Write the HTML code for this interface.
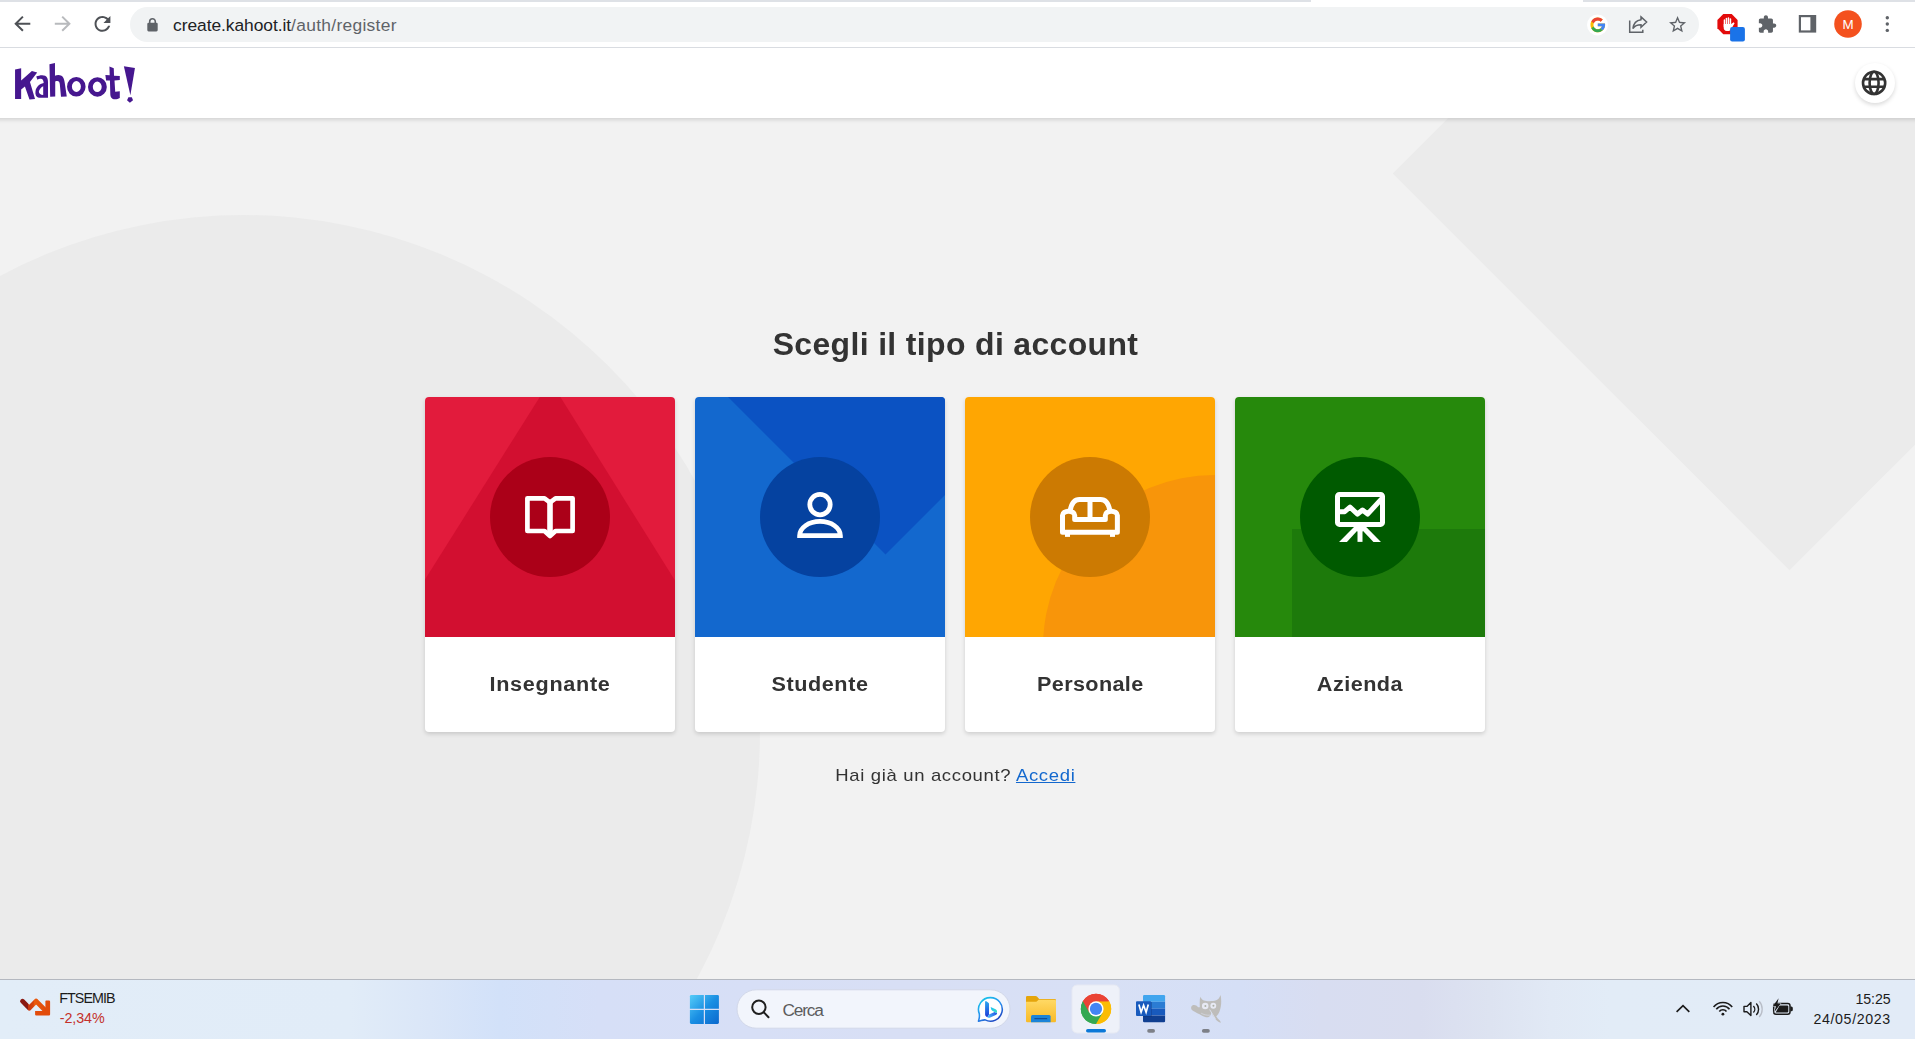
<!DOCTYPE html>
<html lang="it">
<head>
<meta charset="utf-8">
<title>Kahoot!</title>
<style>
*{box-sizing:border-box;margin:0;padding:0}
html,body{width:1915px;height:1039px;overflow:hidden;background:#f2f2f2;font-family:"Liberation Sans",sans-serif}
.abs{position:absolute}
#tabstrip{left:0;top:0;width:1915px;height:2px;background:#dee1e6}
#tabstrip .tab{left:1311px;top:0;width:272px;height:2px;background:#fff}
#toolbar{left:0;top:2px;width:1915px;height:46px;background:#fff;border-bottom:1px solid #d9dce1}
#omni{left:130px;top:7px;width:1569px;height:35px;border-radius:17.5px;background:#f1f3f4}
#url{left:173px;top:12.500px;height:24px;line-height:24px;font-size:17.4px;color:#202124;white-space:nowrap;letter-spacing:-0.05px}
#url span{color:#5f6368;letter-spacing:.3px}
#khwrap{left:0;top:48px;width:1915px;height:84px;overflow:hidden;z-index:5}
#kheader{left:-20px;top:0;width:1955px;height:70px;background:#fff;box-shadow:0 2px 4px 0 rgba(0,0,0,.13)}
#page{left:0;top:118px;width:1915px;height:861px;background:#f2f2f2;overflow:hidden}
#bgcircle{left:-273.500px;top:96.500px;width:1033px;height:1033px;border-radius:50%;background:#ebebeb}
#bgsquare{left:1509px;top:-225px;width:561px;height:561px;background:#ebebeb;transform:rotate(45deg)}
#globe{left:1854.5px;top:62.5px;width:40px;height:40px;border-radius:50%;background:#fff;box-shadow:0 2px 4px 0 rgba(0,0,0,.15);z-index:6}
h1 span{will-change:transform;display:inline-block;transform:scaleX(1.03);letter-spacing:.35px}
h1{left:0;top:322.800px;width:1910px;text-align:center;font-size:31px;font-weight:bold;color:#333;line-height:44px;white-space:nowrap}
.card{top:397px;width:250px;height:335px;border-radius:4px;background:#fff;box-shadow:0 2px 4px 0 rgba(0,0,0,.15);overflow:hidden}
.card .art{left:0;top:0;width:250px;height:240px;overflow:hidden}
.card .dot{left:65px;top:60px;width:120px;height:120px;border-radius:50%}
.lbl span{will-change:transform;display:inline-block;transform:scaleX(1.08);letter-spacing:.65px}
.lbl{top:668.5px;width:250px;text-align:center;font-weight:bold;font-size:20px;color:#333;line-height:30px;white-space:nowrap}
#login span{will-change:transform;display:inline-block;transform:scaleX(1.088);letter-spacing:.6px}
#login{left:0;top:762.7px;width:1910px;text-align:center;font-size:17px;color:#333;line-height:26px;white-space:nowrap}
#login a{color:#1368ce;text-decoration:underline}
#taskbar{left:0;top:979px;width:1915px;height:60px;border-top:1px solid #b4b8c0;background:linear-gradient(90deg,#e2edf8 0,#e1ecf8 350px,#dae6f8 430px,#d2e1f9 500px,#d6dff7 600px,#d8dff5 900px,#d8e0f5 1100px,#d5dff6 1240px,#d8ddf1 1320px,#d9ddef 1420px,#dde3f1 1490px,#e1e9f5 1550px,#e2ecf7 1610px,#e2ebf7 1915px)}
.tk{z-index:10;line-height:20px;white-space:nowrap}
</style>
</head>
<body>
<div id="tabstrip" class="abs"><div class="tab abs"></div></div>
<div id="toolbar" class="abs"></div>
<div id="omni" class="abs"></div>
<div id="url" class="abs">create.kahoot.it<span>/auth/register</span></div>

<svg class="abs" style="left:0;top:0;z-index:3" width="1915" height="48" viewBox="0 0 1915 48">
  <!-- back -->
  <g fill="none" stroke="#4e5156" stroke-width="2" stroke-linecap="butt" stroke-linejoin="miter">
    <path d="M30.300,23.700 H16.500 M22.900,16.600 L15.700,23.700 L22.900,30.800"/>
  </g>
  <!-- forward -->
  <g fill="none" stroke="#b8babd" stroke-width="2">
    <path d="M54.800,23.700 H68.600 M62.200,16.600 L69.400,23.700 L62.200,30.800"/>
  </g>
  <!-- reload -->
  <g transform="translate(90.600,12) scale(0.99)">
    <path fill="#4e5156" d="M17.650 6.350C16.200 4.900 14.210 4 12 4c-4.420 0-7.990 3.580-7.990 8s3.570 8 7.990 8c3.730 0 6.840-2.550 7.730-6h-2.080c-.82 2.330-3.040 4-5.650 4-3.310 0-6-2.690-6-6s2.690-6 6-6c1.660 0 3.140.69 4.220 1.780L13 11h7V4l-2.350 2.350z"/>
  </g>
  <!-- lock -->
  <rect x="147.300" y="22.800" width="10.400" height="8.600" rx="1.300" fill="#5f6368"/>
  <path d="M149.700,23.500 V21.500 A2.800,2.800 0 0 1 155.300,21.500 V23.500" fill="none" stroke="#5f6368" stroke-width="1.600"/>
  <!-- google G -->
  <circle cx="1597.500" cy="24.900" r="10.500" fill="#fff"/>
  <g transform="translate(1589.040,16.140) scale(0.365)">
    <path fill="#FBBC05" d="M43.611,20.083H42V20H24v8h11.303c-1.649,4.657-6.080,8-11.303,8c-6.627,0-12-5.373-12-12c0-6.627,5.373-12,12-12c3.059,0,5.842,1.154,7.961,3.039l5.657-5.657C34.046,6.053,29.268,4,24,4C12.955,4,4,12.955,4,24c0,11.045,8.955,20,20,20c11.045,0,20-8.955,20-20C44,22.659,43.862,21.350,43.611,20.083z"/>
    <path fill="#EA4335" d="M6.306,14.691l6.571,4.819C14.655,15.108,18.961,12,24,12c3.059,0,5.842,1.154,7.961,3.039l5.657-5.657C34.046,6.053,29.268,4,24,4C16.318,4,9.656,8.337,6.306,14.691z"/>
    <path fill="#34A853" d="M24,44c5.166,0,9.860-1.977,13.409-5.192l-6.190-5.238C29.211,35.091,26.715,36,24,36c-5.202,0-9.619-3.317-11.283-7.946l-6.522,5.025C9.505,39.556,16.227,44,24,44z"/>
    <path fill="#4285F4" d="M43.611,20.083H42V20H24v8h11.303c-0.792,2.237-2.231,4.166-4.087,5.571c0.001-0.001,0.002-0.001,0.003-0.002l6.190,5.238C36.971,39.205,44,34,44,24C44,22.659,43.862,21.350,43.611,20.083z"/>
  </g>
  <!-- share -->
  <g fill="none" stroke="#5f6368" stroke-width="1.500">
    <path d="M1629.700,20.600 V32.200 H1642.800 V29.800"/>
    <path d="M1641,16.900 L1646.600,22 L1641,27.300 V24.700 C1637,24.700 1634.600,26 1632.900,28.500 C1633.500,23.700 1636.200,20.300 1641,19.700 Z" stroke-linejoin="miter"/>
  </g>
  <!-- star -->
  <g transform="translate(1667.300,14.400) scale(0.855)">
    <path fill="#5f6368" d="M22 9.240l-7.190-.62L12 2 9.190 8.630 2 9.240l5.460 4.730L5.820 21 12 17.270 18.180 21l-1.630-7.030L22 9.240zM12 15.400l-3.760 2.270 1-4.280-3.320-2.880 4.380-.38L12 6.100l1.710 4.040 4.380.38-3.320 2.880 1 4.280L12 15.400z"/>
  </g>
  <!-- adblock -->
  <polygon points="1723.300,14.100 1731.700,14.100 1737.600,20 1737.600,28.300 1731.700,34.200 1723.300,34.200 1717.400,28.300 1717.400,20" fill="#e30b0b"/>
  <g fill="#fff">
    <rect x="1723.700" y="19.300" width="1.500" height="8" rx=".75"/>
    <rect x="1725.700" y="17.800" width="1.500" height="9" rx=".75"/>
    <rect x="1727.700" y="17.300" width="1.500" height="9" rx=".75"/>
    <rect x="1729.700" y="18.300" width="1.500" height="9" rx=".75"/>
    <path d="M1723.700,24 H1731.200 L1733.600,22.200 L1734.600,23.200 L1731.200,29 C1730.500,30.500 1729.500,31 1728,31 H1726.700 C1724.700,31 1723.700,29.500 1723.700,28 Z"/>
  </g>
  <rect x="1730.100" y="27" width="14.800" height="14.600" rx="2" fill="#1a73e8"/>
  <!-- puzzle -->
  <g transform="translate(1757.200,14.400) scale(0.829)">
    <path fill="#5f6368" d="M20.500 11H19V7c0-1.100-.9-2-2-2h-4V3.500C13 2.120 11.880 1 10.500 1S8 2.120 8 3.500V5H4c-1.100 0-1.990.9-1.990 2v3.800H3.500c1.490 0 2.700 1.210 2.700 2.700s-1.210 2.700-2.700 2.700H2V20c0 1.100.9 2 2 2h3.800v-1.500c0-1.490 1.210-2.700 2.700-2.700 1.490 0 2.700 1.210 2.700 2.700V22H17c1.100 0 2-.9 2-2v-4h1.500c1.380 0 2.500-1.120 2.500-2.500S21.880 11 20.500 11z"/>
  </g>
  <!-- side panel -->
  <rect x="1799.900" y="16.100" width="15.200" height="15.400" fill="none" stroke="#5f6368" stroke-width="2.200"/>
  <rect x="1810.400" y="16" width="5" height="15.600" fill="#5f6368"/>
  <!-- avatar -->
  <circle cx="1848" cy="24" r="13.800" fill="#f4511e"/>
  <text x="1848" y="28.750" text-anchor="middle" font-family="Liberation Sans, sans-serif" font-size="13.400" fill="#fff">M</text>
  <!-- menu dots -->
  <g fill="#5f6368"><circle cx="1887.300" cy="17.700" r="1.700"/><circle cx="1887.300" cy="24" r="1.700"/><circle cx="1887.300" cy="30.400" r="1.700"/></g>
</svg>

<div id="khwrap" class="abs"><div id="kheader" class="abs"></div></div>

<svg class="abs" style="left:10px;top:58px;z-index:6" width="70" height="50" viewBox="0 0 1455 1039" fill="#46178f">
  <polygon points="105,240 232,213 232,470 455,272 565,300 415,500 520,850 405,860 310,590 232,655 232,850 105,850"/>
  <path fill-rule="evenodd" d="M545,385 C600,360 680,345 730,370 C775,395 790,440 790,500 L790,825 L600,825 C540,810 520,760 530,690 C545,600 610,540 700,520 C700,470 680,430 640,430 C610,430 590,440 570,450 Z M690,585 C640,610 605,660 600,700 C600,740 640,765 690,770 Z"/>
  <path d="M820,130 L935,105 L935,370 C970,350 1030,345 1070,370 C1110,395 1125,440 1135,500 L1180,800 L1060,805 L1035,540 C1030,490 1000,465 940,490 L940,800 L835,805 Z"/>
</svg>
<svg class="abs" style="left:66px;top:58px;z-index:6" width="74" height="50" viewBox="-83.2 0 1538.2 1039" fill="#46178f">
  <path fill-rule="evenodd" d="M-62,597.700 A193,202.700 0 1 0 324,597.700 A193,202.700 0 1 0 -62,597.700 Z M39.500,592.500 A93.500,112 0 1 0 226.500,592.500 A93.500,112 0 1 0 39.500,592.500 Z"/>
  <path fill-rule="evenodd" d="M374,601.800 A195.500,202.700 0 1 0 765,601.800 A195.500,202.700 0 1 0 374,601.800 Z M474,599.800 A92.500,109 0 1 0 659,599.800 A92.500,109 0 1 0 474,599.800 Z"/>
  <path d="M820,175 L910,215 L915,370 L1035,375 L1035,455 L925,465 L940,700 L1035,690 L1035,830 C990,860 930,865 890,850 C850,830 840,800 838,760 L830,470 L750,470 L735,355 L825,360 Z"/>
  <polygon points="1120,170 1350,210 1255,775"/>
  <polygon points="1215,815 1285,815 1310,880 1245,930 1185,880"/>
</svg>

<svg class="abs" style="left:1860px;top:69px;z-index:7" width="28" height="28" viewBox="1860 69 28 28" fill="none" stroke="#333" stroke-width="2.600">
  <circle cx="1874.100" cy="82.900" r="11.100"/>
  <ellipse cx="1874.100" cy="82.900" rx="4.500" ry="11.100"/>
  <path d="M1863.600,79.100 H1884.600 M1863.600,86.700 H1884.600"/>
</svg>

<div id="globe" class="abs"></div>
<div id="page" class="abs">
  <div id="bgcircle" class="abs"></div>
  <div id="bgsquare" class="abs"></div>
</div>
<h1 class="abs"><span>Scegli il tipo di account</span></h1>

<!-- Card 1: Insegnante -->
<div class="card abs" style="left:425px">
  <svg class="art abs" width="250" height="240" viewBox="0 0 250 240">
    <rect width="250" height="240" fill="#e21b3c"/>
    <polygon points="114.800,0 135.400,0 250,183.500 250,240 0,240 0,182.500" fill="#d20f30"/>
    <circle cx="125" cy="120" r="60" fill="#ab0018"/>
    <g fill="none" stroke="#fff" stroke-width="4.7" stroke-linejoin="round">
      <path d="M102.4,101.3 H119.5 L125,105.5 L130.500,101.3 H147.6 V134 H130.5 L125,139 L119.5,134 H102.4 Z"/>
    </g>
    <path d="M122.2,103.5 L125,105.6 L127.8,103.5 V136 L125,138.6 L122.2,136 Z" fill="#fff"/>
  </svg>
</div>
<!-- Card 2: Studente -->
<div class="card abs" style="left:695px">
  <svg class="art abs" width="250" height="240" viewBox="0 0 250 240">
    <rect width="250" height="240" fill="#1368ce"/>
    <polygon points="33,0 190.5,157.5 250,98 250,0" fill="#0b52c2"/>
    <circle cx="125" cy="120" r="60" fill="#0542a0"/>
    <g fill="none" stroke="#fff" stroke-width="4.8">
      <circle cx="125" cy="107.6" r="10.2"/>
      <path d="M104.6,138.65 A20.4,14.2 0 0 1 145.4,138.65 Z" stroke-linejoin="miter"/>
    </g>
  </svg>
</div>
<!-- Card 3: Personale -->
<div class="card abs" style="left:965px">
  <svg class="art abs" width="250" height="240" viewBox="0 0 250 240">
    <rect width="250" height="240" fill="#ffa602"/>
    <circle cx="250" cy="250" r="172" fill="#f8950a"/>
    <circle cx="125" cy="120" r="60" fill="#cc7a02"/>
    <svg x="85" y="88" width="80" height="65" viewBox="0 0 1280 1040">
      <g fill="none" stroke="#fff" stroke-width="80" stroke-linejoin="round" stroke-linecap="butt">
        <path d="M200,755 V485 A97.500,65 0 0 1 395,485 V550 H885 V485 A96.500,65 0 0 1 1078,485 V755 Z"/>
        <path d="M325,400 C345,290 400,230 470,230 H810 C880,230 935,290 955,400"/>
        <path d="M640,230 V550"/>
      </g>
      <rect x="240" y="780" width="80" height="50" fill="#fff"/>
      <rect x="960" y="780" width="80" height="50" fill="#fff"/>
    </svg>
  </svg>
</div>
<!-- Card 4: Azienda -->
<div class="card abs" style="left:1235px">
  <svg class="art abs" width="250" height="240" viewBox="0 0 250 240">
    <rect width="250" height="240" fill="#26890c"/>
    <rect x="57" y="132" width="193" height="108" fill="#1d7a0b"/>
    <circle cx="125" cy="120" r="60" fill="#005a00"/>
    <svg x="85" y="88" width="80" height="65" viewBox="0 0 1280 1040">
      <g fill="none" stroke="#fff" stroke-width="80" stroke-linejoin="round">
        <rect x="280" y="150" width="720" height="480" rx="30"/>
        <path d="M320,427 H395 L480,355 L600,465 L680,400 L762,465 L985,222" stroke-linejoin="round"/>
      </g>
      <polygon points="548,668 655,668 430,910 305,910" fill="#fff"/>
      <polygon points="625,668 735,668 975,910 855,910" fill="#fff"/>
      <rect x="600" y="720" width="80" height="190" fill="#fff"/>
      <polygon points="560,660 720,660 682,745 598,745" fill="#fff"/>
    </svg>
  </svg>
</div>
<div class="lbl abs" style="left:425px"><span>Insegnante</span></div>
<div class="lbl abs" style="left:695px"><span style="letter-spacing:.55px">Studente</span></div>
<div class="lbl abs" style="left:965px"><span style="letter-spacing:.34px">Personale</span></div>
<div class="lbl abs" style="left:1235px"><span style="letter-spacing:.45px">Azienda</span></div>

<div id="login" class="abs"><span>Hai già un account? <a>Accedi</a></span></div>
<div id="taskbar" class="abs"></div>

<svg class="abs" style="left:0;top:979px;z-index:9" width="1915" height="60" viewBox="0 979 1915 60">
  <defs>
    <linearGradient id="gw" gradientUnits="userSpaceOnUse" x1="690" y1="995" x2="719" y2="1024"><stop offset="0" stop-color="#55ccf8"/><stop offset=".5" stop-color="#1a8fe3"/><stop offset="1" stop-color="#0b68cd"/></linearGradient>
    <linearGradient id="gst" x1="0" y1="0" x2="1" y2="0"><stop offset="0" stop-color="#8a1912"/><stop offset=".22" stop-color="#8a1912"/><stop offset=".24" stop-color="#c7370f"/><stop offset=".45" stop-color="#d9430c"/><stop offset=".5" stop-color="#ea5a0c"/><stop offset="1" stop-color="#e04a0a"/></linearGradient>
    <linearGradient id="gfold" x1="0" y1="0" x2="0" y2="1"><stop offset="0" stop-color="#ffd965"/><stop offset="1" stop-color="#f8ba27"/></linearGradient>
    <linearGradient id="gbing" x1="0" y1="0" x2="1" y2="1"><stop offset="0" stop-color="#2fc3ee"/><stop offset=".5" stop-color="#1f8fe8"/><stop offset="1" stop-color="#1b4fd0"/></linearGradient>
    <linearGradient id="gbing2" x1="0" y1="0" x2="0" y2="1"><stop offset="0" stop-color="#1b6fe0"/><stop offset="1" stop-color="#1a4bd0"/></linearGradient>
    <linearGradient id="gbing3" x1="0" y1="1" x2="1" y2="0"><stop offset="0" stop-color="#2a8cf0"/><stop offset="1" stop-color="#35d6d0"/></linearGradient>
  </defs>
  <!-- stock widget icon -->
  <g fill="none" stroke-linejoin="miter" stroke-linecap="butt">
    <path d="M22.500,1001.200 L29.300,1008.200 L36.100,1001.100 L46.600,1011.800" stroke="url(#gst)" stroke-width="4.800" stroke-linejoin="round" stroke-linecap="round"/>
  </g>
  <path d="M46,1000.500 H49 Q50.100,1000.500 50.100,1001.600 V1014.500 Q50.100,1015.600 49,1015.600 H36.200 Q35.100,1015.600 35.100,1014.500 V1011 H45.400 V1001 Z" fill="#e24c0b"/>
  <!-- windows logo -->
  <g fill="url(#gw)">
    <path d="M691.200,995 H703.800 V1008.800 H689.900 V996.300 Q689.900,995 691.200,995 Z"/>
    <path d="M705,995 H717.600 Q718.900,995 718.900,996.300 V1008.800 H705 Z"/>
    <path d="M689.900,1010 H703.800 V1023.900 H691.200 Q689.900,1023.900 689.900,1022.600 Z"/>
    <path d="M705,1010 H718.900 V1022.600 Q718.900,1023.900 717.600,1023.900 H705 Z"/>
  </g>
  <!-- search pill -->
  <rect x="737" y="989.800" width="273" height="38.400" rx="19.200" fill="#f2f5fc" stroke="#d2d8e9" stroke-width="1"/>
  <g fill="none" stroke="#1f1f1f" stroke-width="2" stroke-linecap="round">
    <circle cx="758.900" cy="1007.300" r="6.700"/>
    <path d="M763.900,1012.400 L768.500,1017.200"/>
  </g>
  <!-- bing chat -->
  <svg x="972" y="992" width="38" height="34" viewBox="0 0 1161 1039">
    <defs>
      <linearGradient id="bb1" gradientUnits="userSpaceOnUse" x1="300" y1="200" x2="750" y2="900"><stop offset="0" stop-color="#18c4ea"/><stop offset=".5" stop-color="#2790f0"/><stop offset="1" stop-color="#1a3dbd"/></linearGradient>
      <linearGradient id="bb2" gradientUnits="userSpaceOnUse" x1="460" y1="290" x2="460" y2="760"><stop offset="0" stop-color="#2ba6f0"/><stop offset="1" stop-color="#1c3ad8"/></linearGradient>
      <linearGradient id="bb3" gradientUnits="userSpaceOnUse" x1="480" y1="790" x2="760" y2="620"><stop offset="0" stop-color="#49bdf9"/><stop offset="1" stop-color="#2250e4"/></linearGradient>
      <linearGradient id="bb4" gradientUnits="userSpaceOnUse" x1="570" y1="470" x2="765" y2="620"><stop offset="0" stop-color="#1cc2f7"/><stop offset="1" stop-color="#38dcc2"/></linearGradient>
    </defs>
    <path d="M565,172 A360,360 0 1 1 400,852 C340,845 270,880 197,892 C215,830 240,780 222,660 A360,360 0 0 1 565,172 Z" fill="#fff" stroke="url(#bb1)" stroke-width="48" stroke-linejoin="round"/>
    <path d="M400,290 C400,280 420,275 440,285 L500,325 C515,335 520,350 520,370 L520,690 L470,775 L430,745 C410,730 400,710 400,690 Z" fill="url(#bb2)"/>
    <path d="M520,690 L690,610 L765,640 C765,670 750,690 725,705 L560,780 C530,795 500,795 470,775 Z" fill="url(#bb3)"/>
    <path d="M570,460 L720,530 C750,545 765,570 765,600 L765,640 L690,610 L620,570 C600,560 590,545 585,525 Z" fill="url(#bb4)"/>
  </svg>
  <!-- folder -->
  <path d="M1027.200,996 H1035.500 Q1036.500,996 1037.200,996.800 L1039.200,999 H1054.800 Q1056,999 1056,1000.200 V1004 H1026 V997.200 Q1026,996 1027.200,996 Z" fill="#e5a50b"/>
  <path d="M1026,1001.800 H1036.400 L1038.600,999.700 H1054.800 Q1056,999.700 1056,1000.900 V1021 Q1056,1022.200 1054.800,1022.200 H1027.200 Q1026,1022.200 1026,1021 Z" fill="url(#gfold)"/>
  <path d="M1031,1016.600 Q1031,1015.100 1032.500,1015.100 H1049.100 Q1050.600,1015.100 1050.600,1016.600 V1022.200 H1031 Z" fill="#1b84d8"/>
  <rect x="1034.300" y="1018" width="13" height="1.300" rx=".6" fill="#0f4f9c"/>
  <!-- chrome highlight -->
  <rect x="1072" y="985" width="47.400" height="48" rx="5" fill="#eef1f9" stroke="#e6e9f3" stroke-width="1"/>
  <!-- chrome icon -->
  <g transform="translate(1096,1008.900)">
    <circle r="15.200" fill="#fff"/>
    <path d="M0,0 L-13.160,-7.600 A15.200,15.200 0 0 1 13.160,-7.600 Z" fill="#ea4335"/>
    <path d="M0,0 L13.160,-7.600 A15.200,15.200 0 0 1 0,15.200 Z" fill="#fbbc04"/>
    <path d="M0,0 L0,15.200 A15.200,15.200 0 0 1 -13.160,-7.600 Z" fill="#34a853"/>
    <path d="M0,-7.600 H13.160 A15.200,15.200 0 0 1 1.500,15.130 L6.580,3.800 Z" fill="#fbbc04"/>
    <path d="M6.580,3.800 L0,15.200 A15.200,15.200 0 0 1 -13.160,-7.600 L-6.580,3.800 Z" fill="#34a853"/>
    <path d="M-6.580,3.800 L-13.160,-7.600 A15.200,15.200 0 0 1 13.160,-7.600 H0 Z" fill="#ea4335"/>
    <circle r="7.600" fill="#fff"/>
    <circle r="6.100" fill="#4285f4"/>
  </g>
  <rect x="1086" y="1029" width="20" height="3.600" rx="1.800" fill="#0b78d8"/>
  <!-- word -->
  <path d="M1144.200,995 H1163.900 Q1165.100,995 1165.100,996.200 V1001.800 H1143 V996.200 Q1143,995 1144.200,995 Z" fill="#41a5ee"/>
  <rect x="1143" y="1001.800" width="22.100" height="6.800" fill="#2b7cd3"/>
  <rect x="1143" y="1008.600" width="22.100" height="6.800" fill="#185abd"/>
  <path d="M1143,1015.400 H1165.100 V1021 Q1165.100,1022.200 1163.900,1022.200 H1144.200 Q1143,1022.200 1143,1021 Z" fill="#103f91"/>
  <rect x="1143" y="1002" width="9" height="15" fill="#0d2f6e" opacity=".35"/>
  <rect x="1136" y="1001.300" width="15.100" height="14.700" rx="1" fill="#185abd"/>
  <path d="M1138.900,1004.600 L1141.100,1012.300 L1143.600,1005.200 L1146.100,1012.300 L1148.300,1004.600" fill="none" stroke="#fff" stroke-width="1.700" stroke-linejoin="miter"/>
  <rect x="1147.200" y="1029.100" width="7.800" height="3.600" rx="1.800" fill="#7d8088"/>
  <!-- gimp -->
  <svg x="1185" y="988" width="44" height="40" viewBox="0 0 1143 1039" opacity=".9">
    <g fill="#bcbab5">
      <path d="M395,225 C420,270 450,310 490,325 C560,350 720,350 810,320 C860,300 900,250 925,180 C945,280 945,400 930,480 C915,580 880,680 820,730 C790,745 760,740 740,720 L690,640 C670,700 640,745 600,760 C520,765 430,720 380,680 C300,640 220,610 180,570 C150,540 150,480 190,455 C240,430 300,450 340,500 L385,500 C380,400 380,300 395,225 Z"/>
      <path d="M700,680 L760,660 L850,790 C900,830 930,870 935,905 C880,890 830,860 800,820 Z"/>
    </g>
    <path d="M420,655 C480,690 560,715 650,705" fill="none" stroke="#dfe5f3" stroke-width="14"/>
    <path d="M640,560 L790,800" fill="none" stroke="#dfe5f3" stroke-width="22"/>
    <circle cx="525" cy="465" r="85" fill="#e9ebf4"/><circle cx="735" cy="460" r="76" fill="#e9ebf4"/>
    <circle cx="530" cy="465" r="26" fill="#a9ad9f"/><circle cx="738" cy="460" r="26" fill="#a9ad9f"/>
  </svg>
  <rect x="1201.900" y="1029.100" width="7.900" height="3.600" rx="1.800" fill="#7d8088"/>
  <!-- tray -->
  <g fill="none" stroke="#1b1b1b" stroke-width="1.600">
    <path d="M1676.600,1011.800 L1683,1005.600 L1689.300,1011.800" stroke-width="1.700"/>
    <path d="M1713.600,1007.100 A11.700,11.700 0 0 1 1732.200,1007.100" />
    <path d="M1716.300,1009.200 A8.300,8.300 0 0 1 1729.500,1009.200" />
    <path d="M1719.300,1011.500 A4.500,4.500 0 0 1 1726.500,1011.500" />
    <path d="M1744,1006.400 H1746.900 L1750.900,1002.600 V1015.600 L1746.900,1011.800 H1744 Z" stroke-width="1.400" stroke-linejoin="round"/>
    <path d="M1753.400,1005.900 A4.600,4.600 0 0 1 1753.400,1012.400" stroke-width="1.400"/>
    <path d="M1756.300,1003.400 A8.400,8.400 0 0 1 1756.300,1014.900" stroke-width="1.400"/>
    <path d="M1759.200,1001.300 A11.800,11.800 0 0 1 1759.200,1017" stroke="#b9bec8" stroke-width="1.300"/>
    <rect x="1773.700" y="1003.600" width="16.300" height="10.700" rx="2.200" stroke-width="1.500"/>
  </g>
  <circle cx="1722.900" cy="1014.200" r="1.400" fill="#1b1b1b"/>
  <path d="M1790.300,1006.600 H1791.300 Q1792.800,1006.600 1792.800,1008.100 V1009.700 Q1792.800,1011.200 1791.300,1011.200 H1790.300 Z" fill="#1b1b1b"/>
  <path d="M1779.500,1005.400 H1787.200 Q1788.300,1005.400 1788.300,1006.500 V1011.400 Q1788.300,1012.500 1787.200,1012.500 H1775.600 Z" fill="#1b1b1b"/>
  <path d="M1778.600,998.300 L1772.800,1006.300 H1776 L1774.200,1012.200 L1780.800,1003.400 H1777.400 Z" fill="#1b1b1b" stroke="#e2ebf7" stroke-width=".8" paint-order="stroke"/>
</svg>
<div class="abs tk" style="left:59.300px;top:988.400px;font-size:14.300px;color:#1b1b1b;letter-spacing:-.95px">FTSEMIB</div>
<div class="abs tk" style="left:59.800px;top:1008.200px;font-size:14.300px;color:#c4302b;letter-spacing:-.1px">-2,34%</div>
<div class="abs tk" style="left:782.500px;top:999.600px;font-size:17.300px;color:#5c5c5c;letter-spacing:-1.2px">Cerca</div>
<div class="abs tk" style="right:24.500px;top:988.800px;font-size:14.200px;color:#1b1b1b;letter-spacing:-.1px;text-align:right">15:25</div>
<div class="abs tk" style="right:24.100px;top:1008.900px;font-size:14.200px;color:#1b1b1b;letter-spacing:.65px;text-align:right">24/05/2023</div>

</body>
</html>
